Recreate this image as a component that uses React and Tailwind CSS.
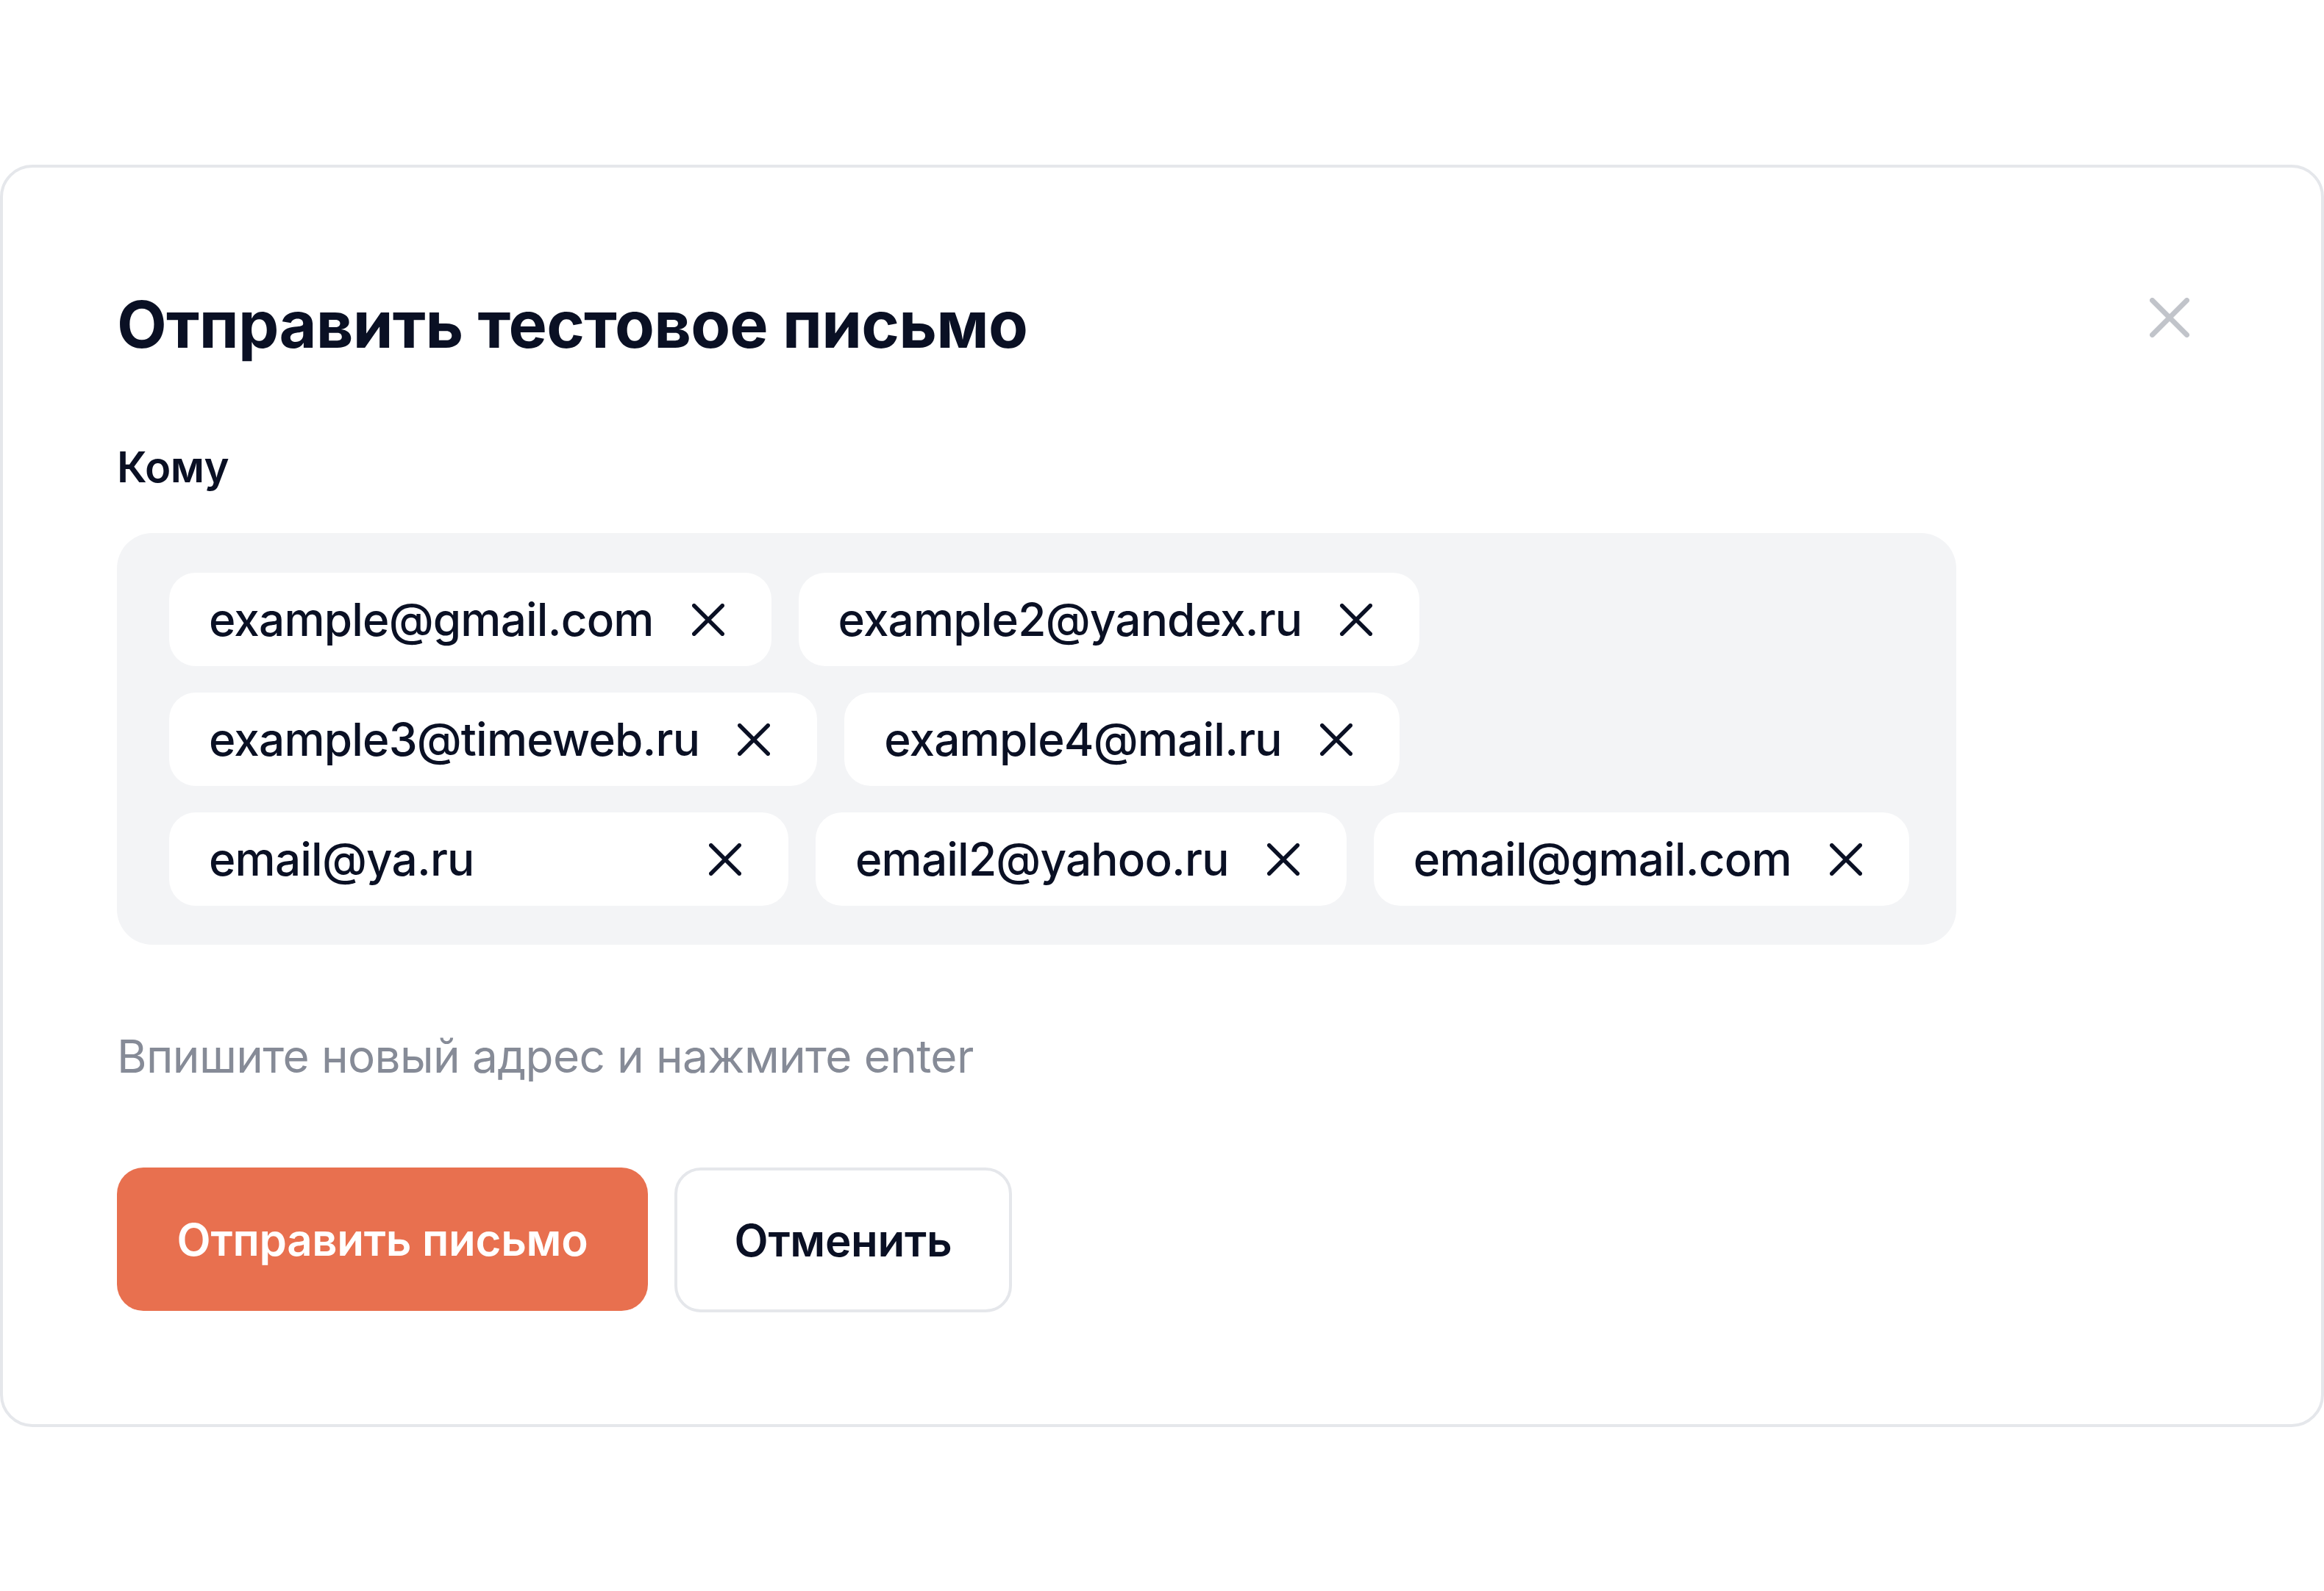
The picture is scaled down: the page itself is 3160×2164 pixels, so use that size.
import { useState } from "react";

function CrossIcon({ size = 44, stroke = 5.5, color = "#0a1024" }) {
  const p = stroke / 2;
  return (
    <svg width={size} height={size} viewBox={`0 0 ${size} ${size}`} fill="none">
      <path
        d={`M${p} ${p}L${size - p} ${size - p}M${size - p} ${p}L${p} ${size - p}`}
        stroke={color}
        strokeWidth={stroke}
        strokeLinecap="round"
      />
    </svg>
  );
}

const initialEmails = [
  { email: "example@gmail.com" },
  { email: "example2@yandex.ru" },
  { email: "example3@timeweb.ru" },
  { email: "example4@mail.ru" },
  { email: "email@ya.ru", wide: true },
  { email: "email2@yahoo.ru" },
  { email: "email@gmail.com" },
];

function EmailTag({ email, wide, onRemove }) {
  return (
    <div
      className={`flex h-[127px] items-center justify-between gap-[52px] rounded-[36px] bg-white pl-[54px] pr-[64px] ${
        wide ? "w-[842px]" : ""
      }`}
    >
      <span className="text-[62px] font-medium leading-none tracking-[-0.8px] text-[#0a1024]">{email}</span>
      <button onClick={onRemove} className="flex items-center justify-center">
        <CrossIcon />
      </button>
    </div>
  );
}

export default function App() {
  const [emails, setEmails] = useState(initialEmails);

  return (
    <div className="min-h-screen bg-white pt-[224px] font-['Inter',sans-serif]">
      <div className="rounded-[44px] border-4 border-[#e5e7eb] bg-white pb-[152px] pl-[155px] pr-[179px] pt-[169px]">
        {/* Header */}
        <div className="flex items-start justify-between">
          <h2 className="text-[88px] font-bold leading-none tracking-[-0.8px] text-[#0a1024]">
            Отправить тестовое письмо
          </h2>
          <button className="mt-[8px]">
            <CrossIcon size={54} stroke={7} color="#c1c4ca" />
          </button>
        </div>

        <div className="mt-[121px] text-[58px] font-semibold leading-none tracking-[-0.5px] text-[#0a1024]">
          Кому
        </div>

        {/* Recipients */}
        <div className="mt-[61px] flex w-[2501px] flex-wrap gap-x-[37px] gap-y-[36px] rounded-[48px] bg-[#f3f4f6] pb-[53px] pl-[71px] pr-[56px] pt-[54px]">
          {emails.map((item, i) => (
            <EmailTag
              key={item.email + i}
              email={item.email}
              wide={item.wide}
              onRemove={() => setEmails(emails.filter((_, j) => j !== i))}
            />
          ))}
        </div>

        <div className="mt-[121px] text-[62px] leading-none tracking-[-0.6px] text-[#868b97]">
          Впишите новый адрес и нажмите enter
        </div>

        {/* Actions */}
        <div className="mt-[120px] flex gap-[36px]">
          <button className="flex h-[195px] w-[722px] items-center justify-center rounded-[36px] bg-[#e8704f] text-[60px] font-semibold tracking-[-0.3px] text-white">
            Отправить письмо
          </button>
          <button className="flex h-[197px] w-[459px] items-center justify-center rounded-[36px] border-4 border-[#e5e7eb] bg-white text-[60px] font-semibold tracking-[-0.3px] text-[#0a1024]">
            Отменить
          </button>
        </div>
      </div>
    </div>
  );
}
